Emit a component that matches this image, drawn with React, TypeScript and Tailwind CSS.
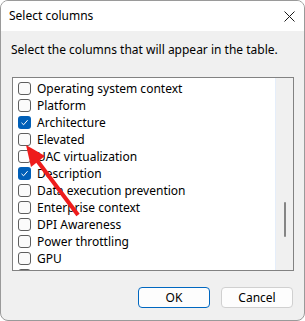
import React from "react";

const items: { label: string; checked: boolean }[] = [
  { label: "Operating system context", checked: false },
  { label: "Platform", checked: false },
  { label: "Architecture", checked: true },
  { label: "Elevated", checked: false },
  { label: "UAC virtualization", checked: false },
  { label: "Description", checked: true },
  { label: "Data execution prevention", checked: false },
  { label: "Enterprise context", checked: false },
  { label: "DPI Awareness", checked: false },
  { label: "Power throttling", checked: false },
  { label: "GPU", checked: false },
  { label: "", checked: false },
];

function Box({ checked }: { checked: boolean }) {
  if (checked) {
    return (
      <div className="w-[13px] h-[13px] rounded-[3px] bg-[#005fb8] flex items-center justify-center shrink-0">
        <svg width="9" height="9" viewBox="0 0 9 9">
          <path d="M1.5 4.8 L3.6 6.8 L7.6 2.2" fill="none" stroke="#ffffff" strokeWidth="1" />
        </svg>
      </div>
    );
  }
  return <div className="w-[13px] h-[13px] rounded-[3px] border border-[#5f5f5f] bg-[#fbfbfb] shrink-0" />;
}

export default function App() {
  return (
    <div className="relative w-[305px] h-[321px] bg-white" style={{ fontFamily: '"Noto Sans", "Open Sans", sans-serif' }}>
      <div className="w-[305px] h-[321px] rounded-lg border border-[#9a9a9a] bg-[#f0f0f0] overflow-hidden flex flex-col text-[12px] text-black">
        <div className="h-[30px] bg-white flex items-center justify-between pl-[8px] pr-[9px] shrink-0">
          <span className="text-[12px] leading-none">Select columns</span>
          <svg width="11" height="11" viewBox="0 0 11 11">
            <path d="M0.5 0.5 L10.5 10.5 M10.5 0.5 L0.5 10.5" stroke="#1a1a1a" strokeWidth="1" />
          </svg>
        </div>
        <div className="pl-[10px] pt-[11px] h-[46px] leading-[16px] shrink-0">Select the columns that will appear in the table.</div>
        <div className="ml-[11px] w-[282px] h-[194px] border border-[#828282] bg-white flex overflow-hidden shrink-0">
          <div className="flex-1 pl-[5px] pt-[2px] flex flex-col">
            {items.map((it, i) => (
              <div key={i} className="h-[17px] flex items-center gap-[6px] shrink-0 whitespace-nowrap">
                <Box checked={it.checked} />
                {it.label && <span className="leading-none">{it.label}</span>}
              </div>
            ))}
          </div>
          <div className="w-[18px] bg-[#f0f0f0] border-l border-[#e5eefa] relative">
            <div className="absolute left-[8px] top-[124px] w-[2px] h-[35px] bg-[#858585] rounded-full" />
          </div>
        </div>
        <div className="flex justify-end gap-[11px] pr-[11px] pt-[16px]">
          <button className="w-[72px] h-[21px] rounded-[4px] border border-[#0067c0] bg-[#fdfdfd] text-[12px] leading-none">OK</button>
          <button className="w-[72px] h-[21px] rounded-[4px] border border-[#d0d0d0] bg-[#fdfdfd] text-[12px] leading-none">Cancel</button>
        </div>
      </div>
      <svg className="absolute left-0 top-0 pointer-events-none" width="305" height="321" viewBox="0 0 305 321">
        <line x1="78" y1="215" x2="36" y2="159" stroke="#ee1c1c" strokeWidth="4" />
        <polygon points="26,145 45,156 31,167" fill="#ee1c1c" />
      </svg>
    </div>
  );
}
